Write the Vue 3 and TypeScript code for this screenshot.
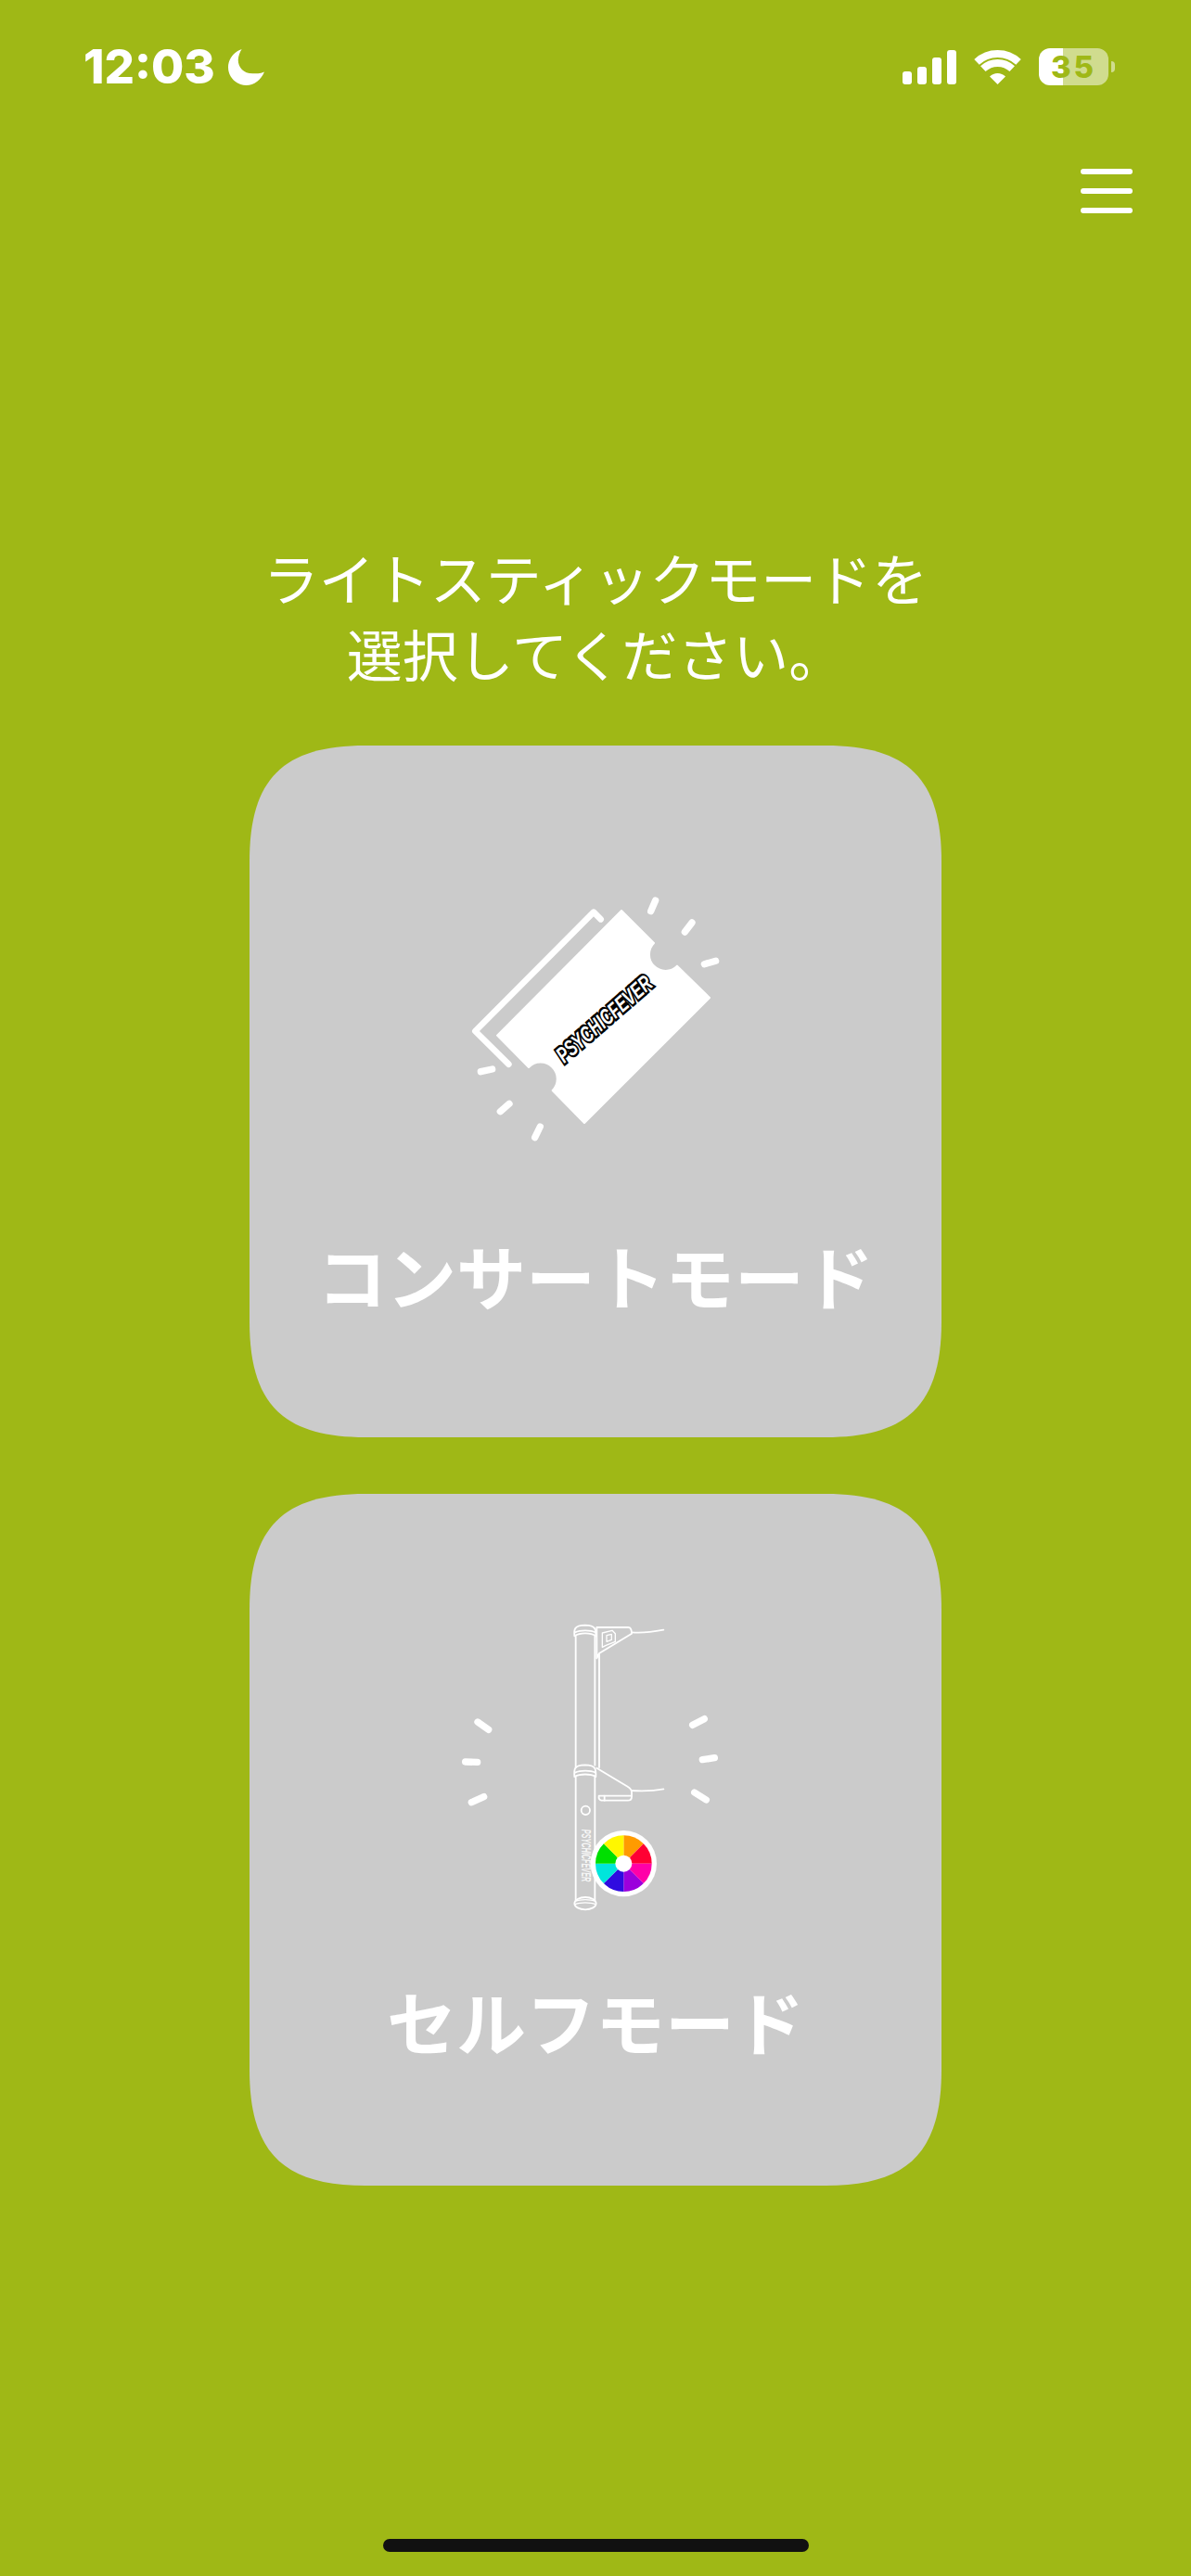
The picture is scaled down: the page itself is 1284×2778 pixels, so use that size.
<script setup lang="ts">
// colour wheel slices, clockwise from 12 o'clock
const sliceColors = ['#ff9b00', '#ff0033', '#ff00a8', '#9b00dc', '#2f0be0', '#00e5dc', '#00df00', '#fff700']
const cx = 577
const cy = 836
const r = 91

function slicePath(i: number) {
  const a0 = (i * Math.PI) / 4
  const a1 = ((i + 1) * Math.PI) / 4
  const x0 = cx + r * Math.sin(a0)
  const y0 = cy - r * Math.cos(a0)
  const x1 = cx + r * Math.sin(a1)
  const y1 = cy - r * Math.cos(a1)
  return `M${cx} ${cy}L${x0} ${y0}A${r} ${r} 0 0 1 ${x1} ${y1}Z`
}

const signalBars = [14, 19, 29, 37]

const ticketRays = [
  [665, 125, 680, 90],
  [775, 192, 798, 162],
  [838, 296, 875, 286],
  [115, 644, 152, 636],
  [178, 773, 207, 748],
  [290, 857, 307, 822],
]
const stickRays = [
  [105, 378, 140, 403],
  [65, 507, 104, 508],
  [85, 638, 125, 620],
  [800, 388, 838, 368],
  [832, 500, 871, 494],
  [806, 606, 844, 630],
]
</script>

<template>
  <div class="screen">
    <div class="status-bar">
      <div class="status-left">
        <span class="time">12:03</span>
        <svg class="moon" viewBox="0 0 40 40">
          <path d="M15 0C6 3 0 11 0 20C0 31 9 40 20 40C29 40 36 34 40 25C35 27 31 27 27 27C17 27 11 20 11 12C11 8 13 3 15 0Z" fill="#fff" />
        </svg>
      </div>
      <div class="status-right">
        <div class="signal">
          <span v-for="h in signalBars" :key="h" class="bar" :style="{ height: h + 'px' }"></span>
        </div>
        <svg class="wifi" viewBox="0 0 51 37">
          <path d="M3 12.9A33 33 0 0 1 48 12.9" fill="none" stroke="#fff" stroke-width="8" />
          <path d="M9.8 20.2A23 23 0 0 1 41.2 20.2" fill="none" stroke="#fff" stroke-width="8" />
          <path d="M25.5 37L17 28.5A12 12 0 0 1 34 28.5Z" fill="#fff" />
        </svg>
        <div class="battery">
          <div class="battery-body">35</div>
          <div class="battery-nub"></div>
        </div>
      </div>
    </div>

    <div class="menu-row">
      <button class="menu" type="button">
        <span></span>
        <span></span>
        <span></span>
      </button>
    </div>

    <h1 class="title">ライトスティックモードを<br />選択してください。</h1>

    <div class="modes">
      <div class="card card-concert">
        <svg class="icon-ticket" viewBox="0 0 960 960">
          <path
            d="M570 123L675 228A52 52 0 0 0 750 302L855 405L450 810L347 705A52 52 0 0 0 270 630L168 527Z"
            fill="#fff"
            stroke="#fff"
            stroke-width="6"
            stroke-linejoin="round"
          />
          <path
            d="M205 620L97 513L480 128L503 151"
            fill="none"
            stroke="#fff"
            stroke-width="20"
            stroke-linecap="round"
            stroke-linejoin="round"
          />
          <line
            v-for="(l, i) in ticketRays"
            :key="i"
            :x1="l[0]"
            :y1="l[1]"
            :x2="l[2]"
            :y2="l[3]"
            stroke="#fff"
            stroke-width="22"
            stroke-linecap="round"
          />
          <text
            class="ticket-logo"
            x="0"
            y="0"
            text-anchor="middle"
            textLength="385"
            lengthAdjust="spacingAndGlyphs"
            transform="translate(530 492) rotate(-41)"
          >PSYCHICFEVER</text>
        </svg>
        <div class="label">コンサートモード</div>
      </div>

      <div class="card card-self">
        <svg class="icon-stick" viewBox="0 0 960 1020">
          <g fill="none" stroke="#fff" stroke-width="5.5" stroke-linecap="round" stroke-linejoin="round">
            <!-- upper tube -->
            <path d="M422 100V525M484 100V518M498 160V525" />
            <path d="M418 100C416 80 416 66 452 65C488 66 488 80 487 100C470 88 436 88 418 100Z" />
            <path d="M420 88C436 80 470 80 486 88" />
            <!-- upper flap -->
            <path d="M490 72H592Q603 72 603 92L498 156L490 172Z" />
            <path d="M603 88C640 92 680 85 706 80" />
            <path d="M508 90L540 82L550 92V118L520 130L508 136ZM522 98L538 94V112L522 118Z" stroke-width="4" />
            <!-- lower joint -->
            <path d="M418 555C416 530 416 518 452 517C488 518 488 530 487 555C470 545 436 545 418 555Z" />
            <path d="M420 542C436 534 470 534 486 542" />
            <path d="M422 555V955M484 555V955" />
            <!-- lower flap -->
            <path d="M490 527L590 587Q603 595 603 605V620Q603 632 590 632H505Q495 630 497 617H602" />
            <path d="M603 600C640 602 680 600 706 595" />
            <path d="M515 617V632" />
            <circle cx="454" cy="664" r="14" />
            <!-- tube end -->
            <ellipse cx="453" cy="965" rx="35" ry="20" />
            <path d="M421 958C436 951 470 951 485 958M420 968C436 961 470 961 486 968" stroke-width="4" />
          </g>
          <text class="stick-logo" x="0" y="0" textLength="170" lengthAdjust="spacingAndGlyphs" transform="translate(440 725) rotate(90) scale(1 1.6)">PSYCHICFEVER</text>
          <circle :cx="cx" :cy="cy" r="107" fill="#fff" />
          <path v-for="(c, i) in sliceColors" :key="c" :d="slicePath(i)" :fill="c" />
          <circle :cx="cx" :cy="cy" r="27" fill="#fff" />
          <line
            v-for="(l, i) in stickRays"
            :key="i"
            :x1="l[0]"
            :y1="l[1]"
            :x2="l[2]"
            :y2="l[3]"
            stroke="#fff"
            stroke-width="22"
            stroke-linecap="round"
          />
        </svg>
        <div class="label">セルフモード</div>
      </div>
    </div>

    <div class="home-indicator"></div>
  </div>
</template>

<style scoped>
.screen {
  width: 1284px;
  height: 2778px;
  background: #9fb816;
  display: flex;
  flex-direction: column;
  align-items: center;
  font-family: "Noto Sans CJK JP", "Noto Sans", sans-serif;
  color: #fff;
}

.status-bar {
  width: 100%;
  height: 92px;
  padding: 52px 82px 0 90px;
  box-sizing: border-box;
  display: flex;
  justify-content: space-between;
  align-items: flex-start;
  flex-shrink: 0;
}

.status-left {
  display: flex;
  align-items: flex-start;
  gap: 14px;
}

.time {
  font-family: Inter, "Liberation Sans", sans-serif;
  font-weight: 800;
  font-size: 51px;
  line-height: 40px;
}

.moon {
  width: 39px;
  height: 39px;
  margin-top: 1px;
}

.status-right {
  display: flex;
  align-items: flex-start;
  gap: 19px;
}

.signal {
  display: flex;
  align-items: flex-end;
  gap: 6px;
  height: 37px;
  margin-top: 2px;
}

.bar {
  width: 10px;
  background: #fff;
  border-radius: 3px;
}

.wifi {
  width: 51px;
  height: 37px;
  margin-top: 2px;
}

.battery {
  display: flex;
  align-items: center;
  gap: 3px;
}

.battery-body {
  width: 75px;
  height: 40px;
  border-radius: 12px;
  background: linear-gradient(90deg, #fff 35%, #d0dc8e 35%);
  color: #9fb816;
  font-family: Inter, "Liberation Sans", sans-serif;
  font-weight: 800;
  font-size: 33px;
  letter-spacing: 3px;
  line-height: 40px;
  text-align: center;
}

.battery-nub {
  width: 4px;
  height: 12px;
  background: #d0dc8e;
  border-radius: 0 4px 4px 0;
}

.menu-row {
  width: 100%;
  display: flex;
  justify-content: flex-end;
  padding: 90px 63px 0 0;
  box-sizing: border-box;
  flex-shrink: 0;
}

.menu {
  width: 56px;
  padding: 0;
  border: 0;
  background: none;
  display: flex;
  flex-direction: column;
  gap: 15px;
}

.menu span {
  display: block;
  height: 6px;
  background: #fff;
  border-radius: 3px;
}

.title {
  margin: 351px 0 0;
  font-weight: 400;
  font-size: 60px;
  line-height: 82px;
  text-align: center;
}

.modes {
  margin-top: 59px;
  display: flex;
  flex-direction: column;
  gap: 61px;
}

.card {
  width: 746px;
  height: 746px;
  box-sizing: border-box;
  background: #cbcbcb;
  display: flex;
  flex-direction: column;
  align-items: center;
  clip-path: path("M0 125C0 36 36 0 125 0H621C710 0 746 36 746 125V621C746 710 710 746 621 746H125C36 746 0 710 0 621Z");
}

.card-concert {
  padding-top: 137px;
}

.card-self {
  padding-top: 120px;
}

.icon-ticket {
  width: 320px;
  height: 320px;
  flex-shrink: 0;
  margin-right: 4px;
}

.icon-stick {
  width: 320px;
  height: 340px;
  flex-shrink: 0;
  margin-right: 4px;
}

.ticket-logo {
  font-family: "Liberation Sans", sans-serif;
  font-weight: 700;
  font-style: italic;
  font-size: 72px;
  fill: #fff;
  stroke: #000;
  stroke-width: 15px;
  paint-order: stroke;
}

.stick-logo {
  font-family: "Liberation Sans", sans-serif;
  font-weight: 700;
  font-style: italic;
  font-size: 26px;
  fill: #fff;
  opacity: 0.85;
}

.label {
  font-weight: 700;
  font-size: 75px;
  line-height: 100px;
  white-space: nowrap;
}

.card-concert .label {
  margin-top: 64px;
}

.card-self .label {
  margin-top: 58px;
}

.home-indicator {
  margin-top: auto;
  margin-bottom: 26px;
  width: 459px;
  height: 14px;
  border-radius: 7px;
  background: #111;
  flex-shrink: 0;
}
</style>
